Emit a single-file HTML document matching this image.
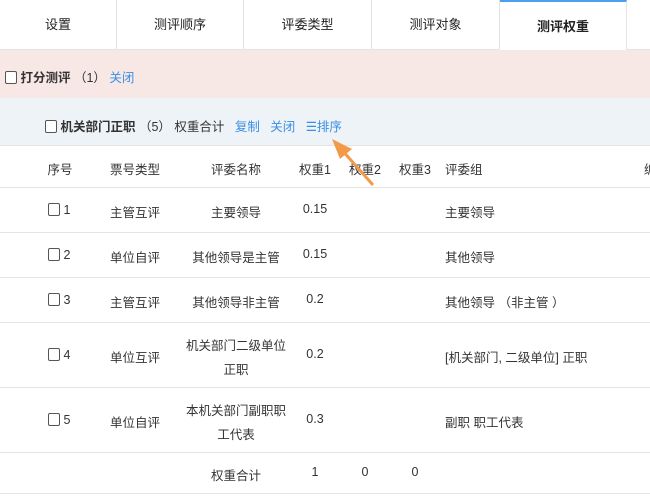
<!DOCTYPE html>
<html><head><meta charset="utf-8"><style>
*{margin:0;padding:0;box-sizing:border-box}
body{width:650px;height:500px;overflow:hidden;background:#fff;font-family:"Liberation Sans","Noto Sans CJK SC",sans-serif;font-size:12.5px;color:#333;position:relative}
.tabs{position:absolute;left:0;top:0;width:650px;height:50px;border-bottom:1px solid #e4e4e4}
.tab{position:absolute;top:0;height:49px;line-height:50px;text-align:center;font-size:13px;color:#222;border-right:1px solid #e4e4e4}
.tab.act{border-top:2px solid #4a9ff0;height:50px;background:#fff;line-height:50px;font-weight:bold}
.pink{position:absolute;left:0;top:50px;width:650px;height:48px;background:#f7e7e5}
.blue{position:absolute;left:0;top:98px;width:650px;height:48px;background:#eef3f7;border-bottom:1px solid #e4e4e4}
.cb{display:inline-block;width:12px;height:13px;border:1px solid #555;border-radius:2px;vertical-align:-2px;background:#fff}
a{color:#3a8ee6;text-decoration:none}
.t{position:absolute;white-space:nowrap}
.c{position:absolute;text-align:center;transform:translateX(-50%);white-space:nowrap}
.line{position:absolute;left:0;width:650px;height:1px;background:#e4e4e4}
</style></head><body>
<div class="tabs">
<div class="tab" style="left:0;width:117px">设置</div>
<div class="tab" style="left:117px;width:127px">测评顺序</div>
<div class="tab" style="left:244px;width:128px">评委类型</div>
<div class="tab" style="left:372px;width:128px">测评对象</div>
<div class="tab act" style="left:500px;width:127px">测评权重</div>
</div>
<div class="pink"><div class="t" style="left:5px;top:17px"><span class="cb"></span> <b>打分测评</b> （1） <a>关闭</a></div></div>
<div class="blue"><div class="t" style="left:45px;top:18px"><span class="cb"></span> <b>机关部门正职</b> （5） 权重合计 &nbsp;&nbsp;<a>复制</a> &nbsp;&nbsp;<a>关闭</a> &nbsp;&nbsp;<a>☰排序</a></div></div>
<div class="c" style="left:60px;top:159px">序号</div>
<div class="c" style="left:135px;top:159px">票号类型</div>
<div class="c" style="left:236px;top:159px">评委名称</div>
<div class="c" style="left:315px;top:159px">权重1</div>
<div class="c" style="left:365px;top:159px">权重2</div>
<div class="c" style="left:415px;top:159px">权重3</div>
<div class="t" style="left:445px;top:159px">评委组</div>
<div class="t" style="left:644px;top:159px">编</div>
<div class="line" style="top:187px"></div>
<div class="t" style="left:48px;top:203px"><span class="cb"></span> 1</div>
<div class="c" style="left:135px;top:202px">主管互评</div><div class="c" style="left:236px;top:202px">主要领导</div><div class="c" style="left:315px;top:202px">0.15</div><div class="t" style="left:445px;top:202px">主要领导</div>
<div class="line" style="top:232px"></div>
<div class="t" style="left:48px;top:248px"><span class="cb"></span> 2</div>
<div class="c" style="left:135px;top:247px">单位自评</div><div class="c" style="left:236px;top:247px">其他领导是主管</div><div class="c" style="left:315px;top:247px">0.15</div><div class="t" style="left:445px;top:247px">其他领导</div>
<div class="line" style="top:277px"></div>
<div class="t" style="left:48px;top:293px"><span class="cb"></span> 3</div>
<div class="c" style="left:135px;top:292px">主管互评</div><div class="c" style="left:236px;top:292px">其他领导非主管</div><div class="c" style="left:315px;top:292px">0.2</div><div class="t" style="left:445px;top:292px">其他领导 （非主管 ）</div>
<div class="line" style="top:322px"></div>
<div class="t" style="left:48px;top:348px"><span class="cb"></span> 4</div>
<div class="c" style="left:135px;top:347px">单位互评</div><div class="c" style="left:236px;top:334px;line-height:24px">机关部门二级单位<br>正职</div><div class="c" style="left:315px;top:347px">0.2</div><div class="t" style="left:445px;top:347px">[机关部门, 二级单位] 正职</div>
<div class="line" style="top:387px"></div>
<div class="t" style="left:48px;top:413px"><span class="cb"></span> 5</div>
<div class="c" style="left:135px;top:412px">单位自评</div><div class="c" style="left:236px;top:399px;line-height:24px">本机关部门副职职<br>工代表</div><div class="c" style="left:315px;top:412px">0.3</div><div class="t" style="left:445px;top:412px">副职 职工代表</div>
<div class="line" style="top:452px"></div>
<div class="c" style="left:236px;top:465px">权重合计</div><div class="c" style="left:315px;top:465px">1</div><div class="c" style="left:365px;top:465px">0</div><div class="c" style="left:415px;top:465px">0</div>
<div class="line" style="top:493px"></div>
<svg style="position:absolute;left:0;top:0" width="650" height="500"><line x1="373" y1="185" x2="341" y2="149" stroke="#f39a4a" stroke-width="3"/><polygon points="332,139 352,149 340,159" fill="#f39a4a"/></svg>
</body></html>
